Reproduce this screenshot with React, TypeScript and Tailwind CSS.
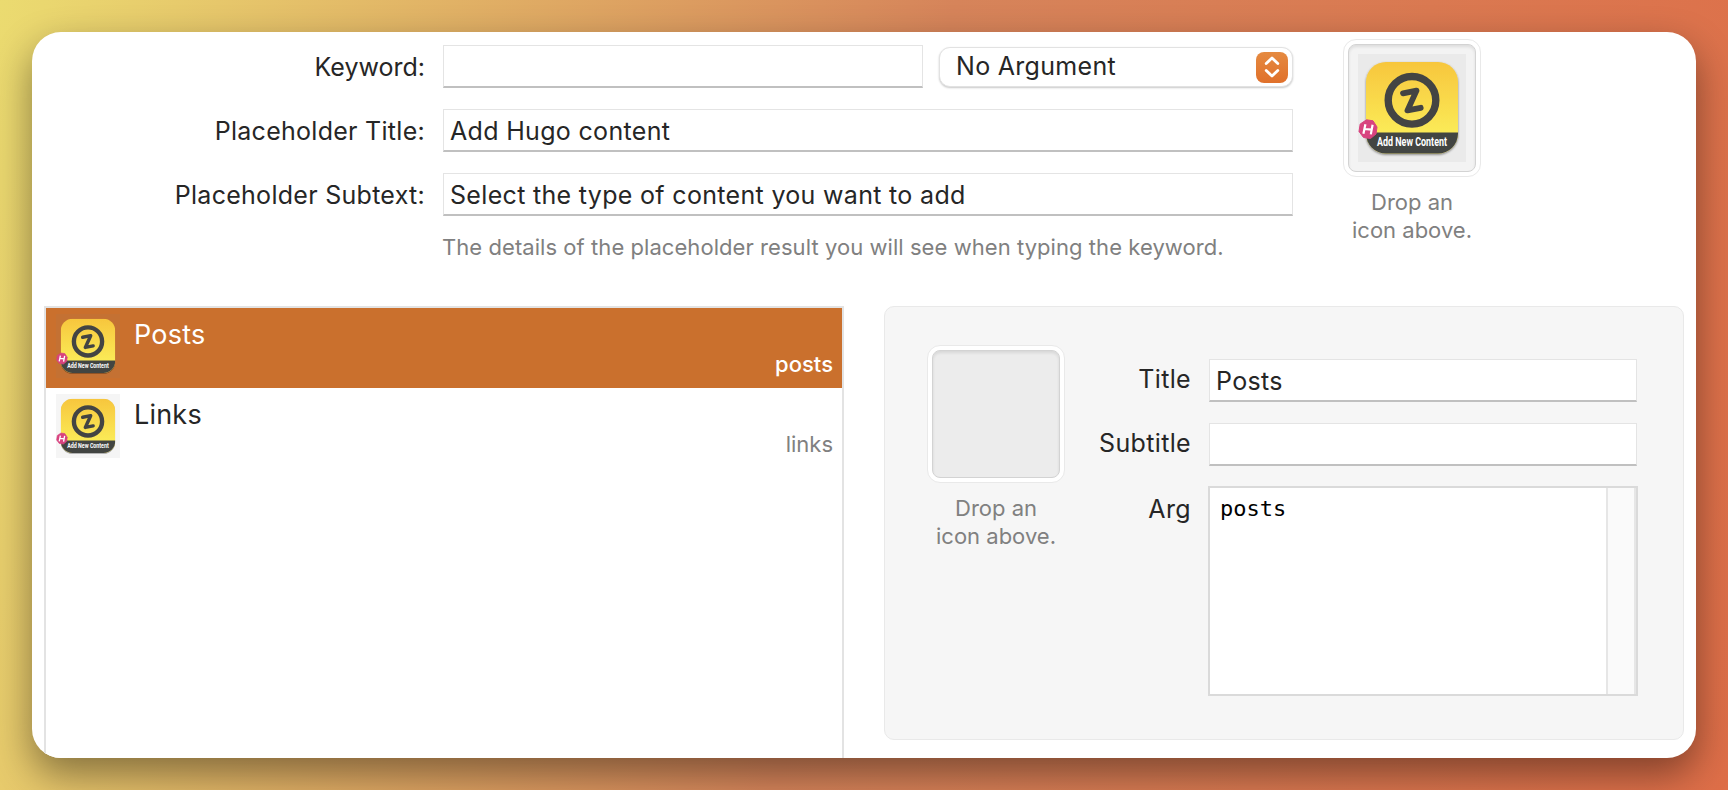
import React from 'react';

function AppIcon({ size }: { size: number }) {
  return (
    <svg width={size} height={size} viewBox="0 0 108 108" className="block shrink-0 overflow-visible">
      <defs>
        <linearGradient id="sun" x1="0" y1="0" x2="0" y2="1">
          <stop offset="0" stopColor="#f7c63d" />
          <stop offset="0.8" stopColor="#fbec58" />
        </linearGradient>
        <clipPath id="tile">
          <rect x="8" y="8" width="92" height="91.5" rx="20" />
        </clipPath>
        <filter id="soft" x="-20%" y="-20%" width="140%" height="140%">
          <feDropShadow dx="0" dy="1" stdDeviation="1.2" floodColor="#000" floodOpacity="0.45" />
        </filter>
      </defs>
      <rect width="108" height="108" fill="#808080" fillOpacity="0.08" />
      <g filter="url(#soft)">
        <g clipPath="url(#tile)">
          <rect x="8" y="8" width="92" height="92" fill="url(#sun)" />
          <rect x="8" y="78.5" width="92" height="22" fill="#434443" />
        </g>
      </g>
      <circle cx="54" cy="46.3" r="23.8" fill="none" stroke="#434443" strokeWidth="7.4" />
      <path d="M45 39.3 L58.5 36.6 L49.5 56.4 L62.7 53.8" fill="none" stroke="#434443" strokeWidth="5.8" strokeLinecap="round" strokeLinejoin="round" />
      <path d="M8.5 65.8 L15 66.8 L19 73 L18 80 L12.5 84.5 L5.5 83.5 L1 77.5 L2.2 70 Z" fill="#d8437f" stroke="#d8437f" strokeWidth="1" strokeLinejoin="round" />
      <path d="M7.4 70.2 L5.4 79.8 M14.6 70.8 L12.8 80.4 M6.6 75 L13.8 75.6" stroke="#fff" strokeWidth="2.2" fill="none" />
      <text x="54" y="91.7" textAnchor="middle" textLength="70" lengthAdjust="spacingAndGlyphs" fill="#fff" fontFamily="Roboto, sans-serif" fontWeight="700" fontSize="13.2">Add New Content</text>
    </svg>
  );
}

function IconWell({ children, light }: { children?: React.ReactNode; light?: boolean }) {
  return (
    <div className="flex w-[138px] flex-col items-center">
      <div className="rounded-[13px] border border-[#e9e9e9] bg-white p-1">
        <div className={`flex size-32 items-center justify-center rounded-[8px] border border-[#d3d3d3] shadow-[inset_0_2px_3px_rgba(0,0,0,0.09)] ${light ? 'bg-[#f3f3f3]' : 'bg-[#ececec]'}`}>
          {children}
        </div>
      </div>
      <div className="mt-[11px] text-center text-[22px] leading-7 text-[#808080]">
        Drop an
        <br />
        icon above.
      </div>
    </div>
  );
}

function Field({ value, className = '' }: { value?: string; className?: string }) {
  return (
    <div className={`flex h-[43px] items-center border border-[#e4e4e4] border-b-2 border-b-[#c0c0c0] bg-white px-1.5 pt-[3px] text-[25px] tracking-[0.32px] text-[#262626] ${className}`}>
      {value}
    </div>
  );
}

function ListRow({ title, arg, selected }: { title: string; arg: string; selected?: boolean }) {
  return (
    <div className={`flex h-20 pl-[10px] pr-[9px] pt-1.5 ${selected ? 'bg-[#ca702d] text-white' : 'text-[#262626]'}`}>
      <AppIcon size={64} />
      <div className="ml-3.5 flex flex-1 flex-col">
        <div className="mt-1 text-[27px] leading-[34px] tracking-[0.2px]">{title}</div>
        <div className={`-mt-[3px] text-right text-[22px] leading-[30px] ${selected ? 'font-medium' : 'text-[#808080]'}`}>{arg}</div>
      </div>
    </div>
  );
}

export default function App() {
  return (
    <div className="h-[790px] w-[1728px] overflow-hidden bg-[linear-gradient(103deg,#ebdb70_0%,#d6845a_50%,#de6e48_100%)] p-8 font-['Inter',sans-serif] text-[#262626]">
      <div className="h-[726px] overflow-hidden rounded-[29px] bg-white shadow-[0_16px_38px_rgba(0,0,0,0.42)]">
        <div className="flex h-[274px] pt-[13px]">
          <div className="flex w-[393px] flex-col gap-[21px] pt-px text-right text-[25px] leading-[43px] tracking-[0.28px]">
            <div className="tracking-normal">Keyword:</div>
            <div>Placeholder Title:</div>
            <div>Placeholder Subtext:</div>
          </div>
          <div className="ml-[18px] flex w-[850px] flex-col gap-[21px]">
            <div className="flex h-[43px]">
              <Field className="w-[480px]" />
              <div className="ml-4 mt-0.5 flex h-10 w-[354px] items-center justify-between rounded-[11px] border border-[#e2e2e2] bg-white pl-4 pr-1 text-[25px] tracking-[0.3px] shadow-[0_1px_2px_rgba(0,0,0,0.22)]">
                <span>No Argument</span>
                <span className="flex h-[31px] w-8 items-center justify-center rounded-[8px] bg-linear-to-b from-[#e58a40] to-[#e0702a]">
                  <svg width="16" height="22" viewBox="0 0 16 22" fill="none" stroke="#fff" strokeWidth="2.8" strokeLinecap="round" strokeLinejoin="round">
                    <path d="M2.2 7.5 L8 2 L13.8 7.5 M2.2 14.5 L8 20 L13.8 14.5" />
                  </svg>
                </span>
              </div>
            </div>
            <Field value="Add Hugo content" />
            <Field value="Select the type of content you want to add" />
            <div className="-ml-px -mt-[5px] whitespace-nowrap text-[22px] leading-[30px] tracking-[0.06px] text-[#808080]">
              The details of the placeholder result you will see when typing the keyword.
            </div>
          </div>
          <div className="-mt-[6px] ml-[50px]">
            <IconWell light>
              <AppIcon size={108} />
            </IconWell>
          </div>
        </div>
        <div className="flex pl-3">
          <div className="h-[460px] w-[800px] border-2 border-[#e3e3e3] bg-white">
            <ListRow title="Posts" arg="posts" selected />
            <ListRow title="Links" arg="links" />
          </div>
          <div className="ml-10 flex h-[434px] w-[800px] rounded-[10px] border border-[#e9e9e9] bg-[#f6f6f6]">
            <div className="ml-[42px] mt-[38px]">
              <IconWell />
            </div>
            <div className="mt-[52px] flex w-[126px] flex-col text-right text-[25px] leading-[43px] tracking-[0.35px]">
              <div className="-mt-px">Title</div>
              <div className="mt-[21px]">Subtitle</div>
              <div className="mt-[23px]">Arg</div>
            </div>
            <div className="ml-[17px] mt-[52px] flex w-[430px] flex-col">
              <Field value="Posts" className="mx-px" />
              <Field className="mx-px mt-[21px]" />
              <div className="mt-5 flex h-[210px] border-2 border-[#dadada] bg-white">
                <div className="flex-1 pl-2.5 pt-2 font-['DejaVu_Sans_Mono',monospace] text-[22px] leading-[26px] text-black">posts</div>
                <div className="w-[30px] border-x-2 border-[#e6e6e6] bg-[#fafafa]" />
              </div>
            </div>
          </div>
        </div>
      </div>
    </div>
  );
}
